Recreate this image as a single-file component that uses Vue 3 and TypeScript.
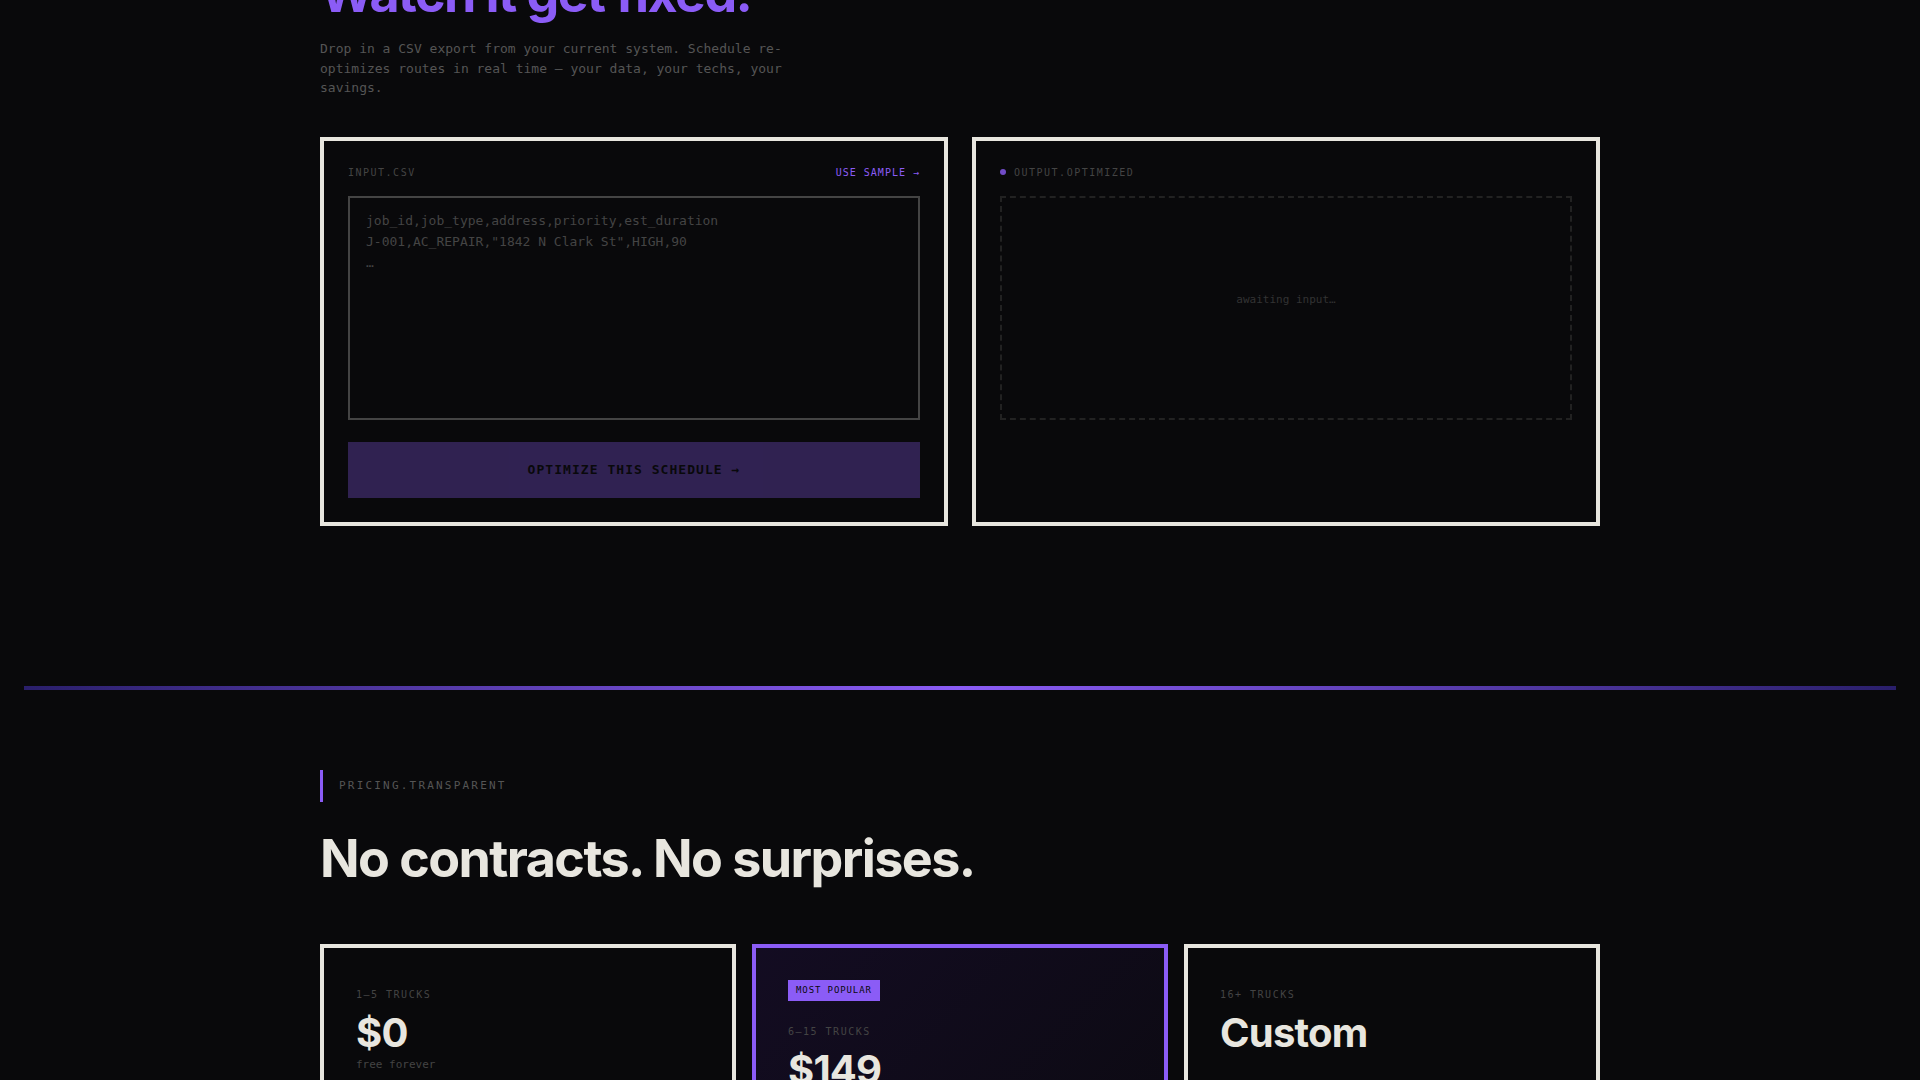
<script setup lang="ts">
import { ref } from 'vue'

interface Plan {
  trucks: string
  price: string
  note: string
  badge?: string
}

const csv = ref<string>('')
const placeholder = 'job_id,job_type,address,priority,est_duration\nJ-001,AC_REPAIR,"1842 N Clark St",HIGH,90\n…'
const sample = 'job_id,job_type,address,priority,est_duration\nJ-001,AC_REPAIR,"1842 N Clark St",HIGH,90'

const plans: Plan[] = [
  { trucks: '1–5 TRUCKS', price: '$0', note: 'free forever' },
  { trucks: '6–15 TRUCKS', price: '$149', note: '', badge: 'MOST POPULAR' },
  { trucks: '16+ TRUCKS', price: 'Custom', note: '' },
]

function useSample(): void {
  csv.value = sample
}
</script>

<template>
  <main class="page">
    <section class="demo container">
      <h2 class="title accent">Watch it get fixed.</h2>
      <p class="lead">
        Drop in a CSV export from your current system. Schedule re-optimizes routes in real time — your data, your
        techs, your savings.
      </p>
      <div class="panels">
        <div class="panel">
          <div class="panel-head">
            <label class="tag" for="csv">INPUT.CSV</label>
            <button class="sample" type="button" @click="useSample">USE SAMPLE →</button>
          </div>
          <textarea id="csv" v-model="csv" class="input" :placeholder="placeholder" spellcheck="false"></textarea>
          <button class="optimize" type="button" :disabled="!csv">OPTIMIZE THIS SCHEDULE →</button>
        </div>
        <div class="panel">
          <div class="panel-head">
            <span class="tag status"><span class="dot"></span>OUTPUT.OPTIMIZED</span>
          </div>
          <div class="output">awaiting input…</div>
        </div>
      </div>
    </section>

    <hr class="divider" />

    <section class="pricing container">
      <p class="eyebrow">PRICING.TRANSPARENT</p>
      <h2 class="title">No contracts. No surprises.</h2>
      <div class="plans">
        <article v-for="plan in plans" :key="plan.trucks" class="plan" :class="{ popular: plan.badge }">
          <span v-if="plan.badge" class="badge">{{ plan.badge }}</span>
          <p class="tag trucks">{{ plan.trucks }}</p>
          <h3 class="price">{{ plan.price }}</h3>
          <p v-if="plan.note" class="note">{{ plan.note }}</p>
        </article>
      </div>
    </section>
  </main>
</template>

<style>
body {
  background: #09090b;
  overflow: hidden;
}
</style>

<style scoped>
.page {
  --ink: #e8e6df;
  --violet: #8b5cf6;
  height: 100vh;
  overflow: hidden;
  background: #09090b;
  color: var(--ink);
  font-family: 'DejaVu Sans Mono', 'Liberation Mono', monospace;
  font-size: 13px;
}

.page *,
.page *::before {
  box-sizing: border-box;
}

h2,
h3,
p {
  margin: 0;
}

button,
textarea {
  font-family: inherit;
  border-radius: 0;
}

.container {
  max-width: 1280px;
  margin: 0 auto;
}

.title {
  font-family: Inter, sans-serif;
  font-size: 52px;
  font-weight: 700;
  line-height: 58px;
  letter-spacing: -0.03em;
}

.accent {
  color: var(--violet);
}

.demo {
  margin-top: -35px;
  padding-bottom: 160px;
}

.lead {
  max-width: 480px;
  margin-top: 16px;
  margin-bottom: 39px;
  color: #555;
  font-size: 13px;
  line-height: 1.5;
}

.panels {
  display: grid;
  grid-template-columns: 1fr 1fr;
  gap: 24px;
}

.panel {
  display: flex;
  flex-direction: column;
  padding: 24px;
  border: 4px solid var(--ink);
}

.panel-head {
  display: flex;
  align-items: center;
  justify-content: space-between;
  height: 15px;
  margin-bottom: 16px;
}

.tag {
  color: #444;
  font-size: 10px;
  line-height: 15px;
  letter-spacing: 0.15em;
}

.status {
  display: flex;
  align-items: center;
  gap: 8px;
}

.dot {
  width: 6px;
  height: 6px;
  border-radius: 50%;
  background: var(--violet);
  opacity: 0.8;
}

.sample {
  padding: 0;
  border: 0;
  background: none;
  color: var(--violet);
  font-size: 10px;
  line-height: 15px;
  letter-spacing: 0.1em;
  cursor: pointer;
}

.input {
  display: block;
  width: 100%;
  height: 224px;
  margin-bottom: 22px;
  padding: 12px 16px;
  border: 2px solid #444;
  outline: none;
  resize: none;
  background: transparent;
  color: var(--ink);
  font-size: 13px;
  line-height: 21px;
}

.input::placeholder {
  color: #444;
}

.optimize {
  height: 56px;
  border: 0;
  background: var(--violet);
  color: #09090b;
  font-size: 13px;
  font-weight: 700;
  letter-spacing: 0.08em;
  cursor: pointer;
}

.optimize:disabled {
  opacity: 0.3;
}

.output {
  display: flex;
  align-items: center;
  justify-content: center;
  height: 224px;
  padding-bottom: 16px;
  border: 2px dashed #222;
  color: #333;
  font-size: 11px;
}

.divider {
  height: 4px;
  margin: 0 24px 80px;
  border: 0;
  background: linear-gradient(90deg, #2a1f6b, var(--violet), #2a1f6b);
}

.eyebrow {
  padding: 8px 16px;
  margin-bottom: 28px;
  border-left: 3px solid var(--violet);
  color: #555;
  font-size: 11px;
  line-height: 16px;
  letter-spacing: 0.2em;
}

.plans {
  display: grid;
  grid-template-columns: repeat(3, 1fr);
  gap: 16px;
  margin-top: 56px;
}

.plan {
  min-height: 480px;
  padding: 32px;
  border: 4px solid var(--ink);
}

.popular {
  border-color: var(--violet);
  background: linear-gradient(135deg, rgba(109, 40, 237, 0.1), transparent);
}

.badge {
  display: block;
  width: fit-content;
  margin-bottom: 16px;
  padding: 4px 8px;
  background: var(--violet);
  color: #09090b;
  font-size: 9px;
  line-height: 13px;
  letter-spacing: 0.1em;
}

.trucks {
  padding-top: 7px;
  margin-bottom: 10px;
}

.price {
  font-family: Inter, sans-serif;
  font-size: 40px;
  font-weight: 700;
  line-height: 42px;
  letter-spacing: -0.02em;
}

.note {
  margin-top: 3px;
  color: #444;
  font-size: 11px;
  line-height: 16px;
}
</style>
